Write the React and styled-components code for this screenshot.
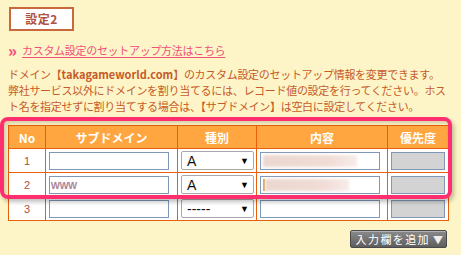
import React from "react"
import styled, { createGlobalStyle } from "styled-components"

const GlobalStyle = createGlobalStyle`
  html, body {
    margin: 0;
    padding: 0;
    background: #fdf5c7;
  }
  body {
    font-family: "Noto Sans CJK JP", "Liberation Sans", sans-serif;
  }
`

const rows = [
  { no: 1, sub: "", type: "A", smudge: 94 },
  { no: 2, sub: "www", type: "A", smudge: 84, caret: true },
  { no: 3, sub: "", type: "-----", smudge: 0 },
]

const App = () => (
  <Page>
    <GlobalStyle />
    <TitleBox>設定2</TitleBox>
    <HelpLink>
      <Arrows>»</Arrows>
      <a href="#">カスタム設定のセットアップ方法はこちら</a>
    </HelpLink>
    <Desc>
      ドメイン【<b>takagameworld.com</b>】のカスタム設定のセットアップ情報を変更できます。
      <br />
      弊社サービス以外にドメインを割り当てるには、レコード値の設定を行ってください。ホス
      <br />
      ト名を指定せずに割り当てする場合は、【サブドメイン】は空白に設定してください。
    </Desc>
    <TableWrap>
      <RecordTable>
        <colgroup>
          <col style={{ width: 37 }} />
          <col style={{ width: 132 }} />
          <col style={{ width: 79 }} />
          <col style={{ width: 131 }} />
          <col style={{ width: 61 }} />
        </colgroup>
        <thead>
          <tr>
            <Th>No</Th>
            <Th>サブドメイン</Th>
            <Th>種別</Th>
            <Th>内容</Th>
            <Th>優先度</Th>
          </tr>
        </thead>
        <tbody>
          {rows.map((r) => (
            <tr key={r.no}>
              <NoCell>{r.no}</NoCell>
              <Td>
                <TextField defaultValue={r.sub} readOnly />
              </Td>
              <Td>
                <SelectBox>
                  <span>{r.type}</span>
                  <Caret>▼</Caret>
                </SelectBox>
              </Td>
              <Td>
                <FieldBox>
                  {r.caret && <Cursor />}
                  {r.smudge > 0 && <Smudge style={{ width: r.smudge }} />}
                </FieldBox>
              </Td>
              <Td>
                <PriorityField />
              </Td>
            </tr>
          ))}
        </tbody>
      </RecordTable>
      <Highlight />
    </TableWrap>
    <ButtonRow>
      <AddButton>
        入力欄を追加
        <BtnArrow>▼</BtnArrow>
      </AddButton>
    </ButtonRow>
  </Page>
)

export default App

/**
 * STYLING
 */

const Page = styled.div`
  width: 461px;
  height: 255px;
  box-sizing: border-box;
  padding: 7px 13px 0 8px;
  overflow: hidden;
`

const TitleBox = styled.div`
  margin-left: 1px;
  width: 61px;
  height: 20px;
  border: 2px solid #c8683c;
  background: #fff;
  color: #b0503e;
  font-weight: 700;
  font-size: 12px;
  line-height: 20px;
  text-align: center;
  letter-spacing: 0.5px;
`

const HelpLink = styled.div`
  margin-top: 11px;
  height: 16px;
  display: flex;
  align-items: center;
  font-size: 11px;
  letter-spacing: -0.3px;

  a {
    color: #f0507c;
    text-decoration: underline;
    text-underline-offset: 2px;
  }
`

const Arrows = styled.span`
  color: #ff4a7a;
  font-weight: 900;
  font-size: 16px;
  line-height: 14px;
  width: 14px;
  letter-spacing: 0;
`

const Desc = styled.p`
  margin: 8px 0 0;
  color: #c65a2a;
  font-size: 11px;
  line-height: 16px;
  letter-spacing: -0.3px;
  white-space: nowrap;

  b {
    font-weight: 700;
    letter-spacing: 0;
  }
`

const TableWrap = styled.div`
  position: relative;
  margin-top: 11px;
`

const RecordTable = styled.table`
  width: 440px;
  border-collapse: collapse;
  table-layout: fixed;
  background: #fff;
  border: 1px solid #e8600c;
`

const Th = styled.th`
  height: 22px;
  padding: 0;
  background: #ffa640;
  color: #fff;
  font-size: 12px;
  font-weight: 700;
  border: 1px solid #e8600c;
  text-align: center;
`

const Td = styled.td`
  height: 23px;
  padding: 0 3px;
  border: 1px solid #e8600c;
  vertical-align: middle;
`

const NoCell = styled(Td)`
  text-align: center;
  color: #b0503a;
  font-size: 11px;
  font-family: "Liberation Sans", sans-serif;
`

const TextField = styled.input`
  display: block;
  box-sizing: border-box;
  width: 120px;
  height: 18px;
  margin: 0;
  padding: 0 0 0 1px;
  border: 1px solid #7f98b8;
  background: #fff;
  font-family: "Liberation Sans", sans-serif;
  font-size: 12px;
  color: #a27c90;
  text-shadow: 0 0 1px rgba(190, 120, 150, 0.6);
  outline: none;
`

const SelectBox = styled.div`
  box-sizing: border-box;
  width: 73px;
  height: 19px;
  display: flex;
  align-items: center;
  justify-content: space-between;
  padding: 0 4px 0 5px;
  border: 1px solid #a9a9a9;
  border-radius: 2px;
  background: #fff;
  font-family: "Liberation Sans", sans-serif;
  font-size: 14px;
  color: #111;
`

const Caret = styled.span`
  font-size: 9px;
  color: #000;
`

const FieldBox = styled.div`
  box-sizing: border-box;
  width: 120px;
  height: 18px;
  padding: 2px 0 2px 2px;
  display: flex;
  align-items: stretch;
  border: 1px solid #7f98b8;
  background: #fff;
`

const Cursor = styled.div`
  width: 2px;
  background: #e3a050;
`

const Smudge = styled.div`
  background: linear-gradient(90deg, #ecd6d0, #f1dcd6 70%, #f7ecea);
  filter: blur(1.5px);
`

const PriorityField = styled.div`
  box-sizing: border-box;
  width: 54px;
  height: 18px;
  border: 1px solid #7f98b8;
  background: #d3d3d3;
`

const Highlight = styled.div`
  position: absolute;
  left: -8px;
  top: -8px;
  width: 452px;
  height: 82px;
  box-sizing: border-box;
  border: 4px solid #ff2e6e;
  border-radius: 8px;
  box-shadow: 2px 3px 4px rgba(0, 0, 0, 0.25),
    inset 2px 2px 4px rgba(0, 0, 0, 0.18);
  pointer-events: none;
`

const ButtonRow = styled.div`
  display: flex;
  justify-content: flex-end;
  margin-top: 9px;
  padding-right: 1px;
`

const AddButton = styled.button`
  display: flex;
  align-items: center;
  gap: 3px;
  height: 18px;
  padding: 0 3px 0 5px;
  border: 1px solid #4a4a4a;
  border-radius: 2px;
  background: linear-gradient(#8a8a8a, #5e5e5e);
  box-shadow: inset 0 1px 0 rgba(255, 255, 255, 0.35);
  color: #fff;
  font-family: "Noto Sans CJK JP", sans-serif;
  font-size: 11px;
  letter-spacing: 1.4px;
  cursor: pointer;
`

const BtnArrow = styled.span`
  font-size: 10px;
  letter-spacing: 0;
  color: #eee;
`
